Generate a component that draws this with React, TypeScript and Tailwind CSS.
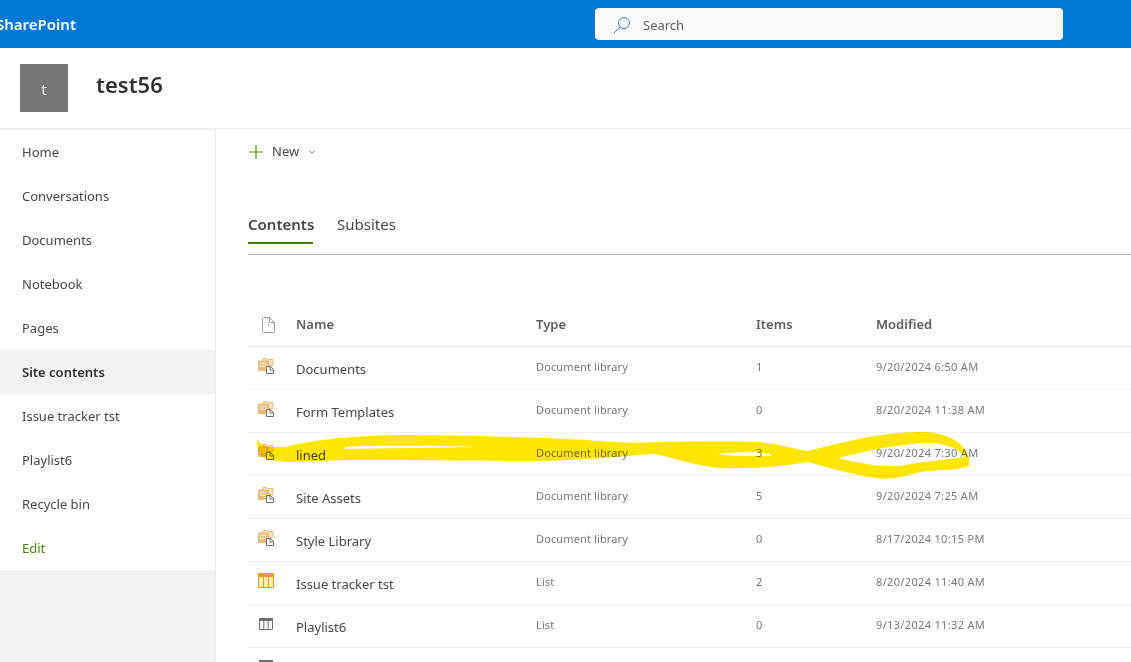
import { ChevronDown } from "lucide-react";

const font = "font-['Noto_Sans','Open_Sans',sans-serif]";

const navItems = [
  "Home",
  "Conversations",
  "Documents",
  "Notebook",
  "Pages",
  "Site contents",
  "Issue tracker tst",
  "Playlist6",
  "Recycle bin",
];

type RowIcon = "library" | "tracker" | "list";

const rows: { name: string; type: string; items: string; modified: string; icon: RowIcon }[] = [
  { name: "Documents", type: "Document library", items: "1", modified: "9/20/2024 6:50 AM", icon: "library" },
  { name: "Form Templates", type: "Document library", items: "0", modified: "8/20/2024 11:38 AM", icon: "library" },
  { name: "lined", type: "Document library", items: "3", modified: "9/20/2024 7:30 AM", icon: "library" },
  { name: "Site Assets", type: "Document library", items: "5", modified: "9/20/2024 7:25 AM", icon: "library" },
  { name: "Style Library", type: "Document library", items: "0", modified: "8/17/2024 10:15 PM", icon: "library" },
  { name: "Issue tracker tst", type: "List", items: "2", modified: "8/20/2024 11:40 AM", icon: "tracker" },
  { name: "Playlist6", type: "List", items: "0", modified: "9/13/2024 11:32 AM", icon: "list" },
];

function LibraryIcon() {
  return (
    <svg width="16" height="16" viewBox="0 0 16 16" className="block">
      <path d="M5 .5h4l1 1h5v6H5z" fill="#f6e3c2" stroke="#e8bd7c" strokeWidth="1" />
      <path d="M0 2.500h11V13H0z" fill="#e8bd7c" />
      <path d="M2 4.500h6v4.500H2z" fill="#f6e6c8" />
      <path d="M3 5.500h1.500v2.500H3zM5.500 5.500H7v2.500H5.500z" fill="#e3b777" />
      <path d="M8.500 8.500h4l3 3v4h-7z" fill="#ffffff" stroke="#6e6e6e" strokeWidth="1" />
      <path d="M12 8.500V12h3.500" fill="none" stroke="#6e6e6e" strokeWidth="1" />
    </svg>
  );
}

function TrackerIcon() {
  return (
    <svg width="16" height="15" viewBox="0 0 16 15" className="block">
      <path d="M0 0h16v15H0z" fill="#ea9a26" />
      <path d="M1 4h4v10H1zM6 4h4v10H6zM11 4h4v10h-4z" fill="#ffeeb4" />
    </svg>
  );
}

function ListIcon() {
  return (
    <svg width="14" height="12" viewBox="0 0 14 12" className="block">
      <path d="M0 0h14v3H0z" fill="#6e6e6e" />
      <path d="M.5 .5h13v11H.5zM4.800 3v8.500M9.200 3v8.500" fill="none" stroke="#6e6e6e" strokeWidth="1" />
    </svg>
  );
}

function RowGlyph({ icon }: { icon: RowIcon }) {
  if (icon === "library") return <div className="ml-[10px] -mt-[5px] w-4"><LibraryIcon /></div>;
  if (icon === "tracker") return <div className="ml-[10px] -mt-[5px] w-4"><TrackerIcon /></div>;
  return <div className="ml-[11px] -mt-[5px] w-[14px]"><ListIcon /></div>;
}

export default function App() {
  return (
    <div className={`relative h-[662px] w-[1131px] overflow-hidden bg-white ${font}`}>
      {/* Suite bar */}
      <div className="relative flex h-12 items-center bg-[#0078d4]">
        <span className="-ml-[4px] text-[15px] font-semibold text-white">SharePoint</span>
        <div className="absolute left-[595px] top-[8px] flex h-8 w-[468px] items-center rounded-[4px] bg-[#fafafa] pl-[18px]">
          <svg width="18" height="18" viewBox="0 0 18 18" fill="none" stroke="#3f78c9" strokeWidth="1" className="mt-[1px]">
            <circle cx="11" cy="7" r="5.500" />
            <path d="M7 11 1 17" />
          </svg>
          <span className="ml-[12px] pt-[3px] text-[13px] text-[#605e5c]">Search</span>
        </div>
      </div>

      {/* Site header */}
      <div className="flex h-[81px] border-b border-[#eeeeee]">
        <div className="ml-5 mt-4 flex h-12 w-12 items-center justify-center bg-[#767676] pt-[3px] text-[15px] text-[#e6e6e6]">
          t
        </div>
        <div className="ml-7 mt-[16px] text-[22px] font-semibold leading-[40px] text-[#323130]">test56</div>
      </div>

      <div className="flex h-[533px]">
        {/* Left nav */}
        <nav className="flex w-[216px] shrink-0 flex-col border-r border-[#edebe9] bg-[#f3f2f1]">
          <div className="border-t border-[#edebe9] bg-white">
            {navItems.map((item) => (
              <div
                key={item}
                className={
                  item === "Site contents"
                    ? "flex h-11 items-center bg-[#f3f2f1] pl-[22px] pt-[2px] text-[13px] font-semibold text-[#323130]"
                    : "flex h-11 items-center pl-[22px] pt-[2px] text-[13px] text-[#484644]"
                }
              >
                {item}
              </div>
            ))}
            <div className="flex h-11 items-center pl-[22px] pt-[2px] text-[13px] text-[#498205]">Edit</div>
          </div>
        </nav>

        {/* Content */}
        <main className="min-w-0 flex-1 pl-8">
          <div className="flex h-11 items-center pt-[1px]">
            <svg width="14" height="14" viewBox="0 0 14 14" className="ml-[1px] block" stroke="#4f9a00" strokeWidth="1.2">
              <path d="M7 0v14M0 7h14" />
            </svg>
            <span className="ml-[9px] text-[13px] text-[#484644]">New</span>
            <ChevronDown size={10} className="ml-[8px] text-[#605e5c]" />
          </div>

          <div className="mt-[36px] flex h-[46px] gap-6 border-b border-[#b3b0ad]">
            <div className="h-[35px] w-[65px] border-b-2 border-[#498205] pt-[4px] text-[15px] font-semibold whitespace-nowrap text-[#484644]">
              Contents
            </div>
            <div className="pt-[4px] text-[15px] text-[#484644]">Subsites</div>
          </div>

          {/* Table */}
          <div className="mt-[48px]">
            <div className="flex h-[44px] items-center border-b border-[#edebe9] text-[13px] font-semibold text-[#605e5c]">
              <div className="w-12 pl-[14px]">
                <svg width="13" height="16" viewBox="0 0 13 16" fill="none" stroke="#a19f9d" className="block">
                  <path d="M1.500 .5h6l5 5v9a1 1 0 0 1-1 1h-10a1 1 0 0 1-1-1v-13a1 1 0 0 1 1-1z" />
                  <path d="M7.500 .5v5h5" />
                  <path d="M6 8h1" stroke="#605e5c" />
                </svg>
              </div>
              <div className="w-60">Name</div>
              <div className="w-[220px]">Type</div>
              <div className="w-[120px]">Items</div>
              <div>Modified</div>
            </div>
            {rows.map((row) => (
              <div key={row.name} className="flex h-[43px] items-center border-b border-[#f1f0ef]">
                <div className="w-12"><RowGlyph icon={row.icon} /></div>
                <div className="w-60 pt-[4px] text-[13px] text-[#484644]">{row.name}</div>
                <div className="w-[220px] pb-[2px] text-[11px] tracking-[0.12px] text-[#797775]">{row.type}</div>
                <div className="w-[120px] pb-[2px] text-[11px] text-[#797775]">{row.items}</div>
                <div className="pb-[2px] text-[11px] tracking-[0.34px] text-[#797775]">{row.modified}</div>
              </div>
            ))}
            <div className="ml-[11px] mt-[12px] w-[14px]"><ListIcon /></div>
          </div>
        </main>
      </div>

      {/* Yellow marker scribble over the "lined" row */}
      <svg
        width="1131"
        height="662"
        viewBox="0 0 1131 662"
        className="pointer-events-none absolute left-0 top-0 mix-blend-multiply"
      >
        <path
          d="M257 440 C260 443 263 446 270 447 L285 447 C310 441 340 436 400 435 C470 435 560 438 600 441 C625 443 640 443 660 442 C690 441 740 441 760 442 C780 444 795 449 808 451 C850 440 890 431 925 432 C950 433 966 445 969 458 L969 466 C962 470 935 470 920 472 C905 477 890 480 875 478 C850 474 830 468 808 462 C780 467 745 469 720 468 C695 466 675 458 655 454 C620 456 570 462 520 461 C450 461 360 459 320 461 C305 462 295 462 285 462 L272 460 C262 458 257 455 257 440 Z M345 447 C380 445 440 446 480 447 L345 449 Z M717 454 C735 452 755 452 768 453 L772 456 C750 456 730 456 717 454 Z M838 458 C870 450 905 443 930 443 C950 444 960 450 965 457 C945 460 925 461 905 465 C890 468 865 465 838 458 Z"
          fill="#ffe600"
          fillRule="evenodd"
        />
      </svg>
    </div>
  );
}
